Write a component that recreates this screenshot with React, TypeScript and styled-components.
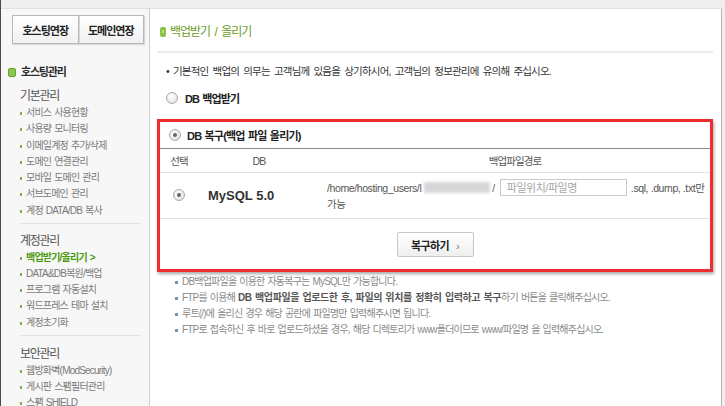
import React from 'react';
import styled, { createGlobalStyle } from 'styled-components';

const GlobalStyle = createGlobalStyle`
  html, body { margin: 0; padding: 0; }
  body {
    background: #e9e9e9;
    font-family: "Liberation Sans", "Noto Sans CJK KR", sans-serif;
    color: #333;
  }
`;

const Page = styled.div`
  display: flex;
  height: 406px;
  box-sizing: border-box;
  padding-top: 8px;
  border-left: 1px solid #4b4b4b;
  background: #eeeeee;
  overflow: hidden;
`;

const Sidebar = styled.aside`
  width: 149px;
  flex: none;
  box-sizing: border-box;
  background: #f7f7f7;
  border-right: 1px solid #cdcdcd;
  border-top: 1px solid #e0e0e0;
  padding-top: 6px;
`;

const ExtendRow = styled.div`
  display: flex;
  margin: 0 5px 0 11px;
  box-shadow: 1px 1px 1px rgba(0, 0, 0, 0.12);
`;

const ExtendButton = styled.button`
  flex: 1;
  height: 29px;
  border: 1px solid #b8b8b8;
  background: linear-gradient(#ffffff, #f0f0f0);
  font-family: inherit;
  font-size: 11px;
  font-weight: bold;
  letter-spacing: -1px;
  color: #222;
  padding: 0;
  & + & {
    border-left: none;
    box-shadow: inset 1px 0 0 #d8d8d8;
  }
`;

const SideHead = styled.div`
  display: flex;
  align-items: center;
  gap: 5px;
  margin-top: 19px;
  padding-left: 7px;
  line-height: 18px;
  font-size: 11px;
  font-weight: bold;
  letter-spacing: -1.2px;
  color: #2d2d2d;
`;

const GreenSquare = styled.span`
  width: 6px;
  height: 7px;
  border-radius: 2px;
  background: #8cc64c;
  border: 1px solid #62a12b;
`;

const Group = styled.div<{ $pt: number; $last?: boolean }>`
  margin: 0 8px 0 19px;
  padding: ${(p) => p.$pt}px 0 ${(p) => (p.$last ? 0 : 3.5)}px;
  border-bottom: ${(p) => (p.$last ? 'none' : '1px solid #e3e3e3')};
`;

const GroupTitle = styled.div`
  font-size: 12px;
  line-height: 17px;
  letter-spacing: -1.3px;
  color: #555;
`;

const SideItem = styled.div<{ $active?: boolean }>`
  position: relative;
  padding-left: 6px;
  font-size: 10px;
  line-height: 16.3px;
  letter-spacing: -0.8px;
  word-spacing: 1px;
  color: ${(p) => (p.$active ? '#4d9a10' : '#7a7a7a')};
  font-weight: ${(p) => (p.$active ? 'bold' : 'normal')};
  white-space: nowrap;
  &::before {
    content: '';
    position: absolute;
    left: 0;
    top: 7px;
    width: 2px;
    height: 3px;
    background: #7db04a;
  }
`;

const Main = styled.main`
  flex: 1;
  background: #fff;
  border-top: 1px solid #e0e0e0;
  border-right: 1px solid #b4b4b4;
  margin-right: 3px;
  padding: 0 8px 0 7px;
`;

const Title = styled.h1`
  display: flex;
  align-items: center;
  gap: 4px;
  margin: 0;
  padding: 15px 0 11px 3px;
  line-height: 16px;
  font-size: 12px;
  font-weight: normal;
  letter-spacing: -1px;
  word-spacing: 2px;
  color: #6c9d1e;
  border-bottom: 2px solid #ededed;
`;

const TitleIcon = styled.span`
  width: 6px;
  height: 10px;
  border-radius: 2px;
  background: #8cc243;
  color: #fff;
  font-size: 7px;
  line-height: 10px;
  text-align: center;
  letter-spacing: 0;
`;

const Intro = styled.p`
  margin: 10px 0 0;
  padding-left: 9px;
  font-size: 10.5px;
  line-height: 16px;
  letter-spacing: -0.8px;
  word-spacing: 2px;
  color: #333;
`;

const RadioRow = styled.label`
  display: flex;
  align-items: center;
  gap: 7px;
  margin-top: 9px;
  padding-left: 9px;
  height: 20px;
  font-size: 11px;
  font-weight: bold;
  letter-spacing: -0.9px;
  word-spacing: 1px;
  color: #222;
`;

const Radio = styled.span<{ $on?: boolean }>`
  position: relative;
  flex: none;
  width: 10px;
  height: 10px;
  border-radius: 50%;
  border: 1px solid #a9a9a9;
  background: radial-gradient(circle at 40% 35%, #ffffff, #dcdcdc);
  &::after {
    content: '';
    display: ${(p) => (p.$on ? 'block' : 'none')};
    position: absolute;
    left: 3px;
    top: 3px;
    width: 4px;
    height: 4px;
    border-radius: 50%;
    background: #666;
  }
`;

const RedBox = styled.section`
  margin-top: 11px;
  border: 3px solid #ee2d31;
  box-shadow: 1px 2px 3px rgba(0, 0, 0, 0.35);
  background: #fff;
`;

const BoxTitle = styled.div`
  display: flex;
  align-items: center;
  gap: 6px;
  height: 26px;
  padding-left: 9px;
  font-size: 11px;
  font-weight: bold;
  letter-spacing: -0.8px;
  word-spacing: 1px;
  color: #222;
`;

const Table = styled.table`
  width: 100%;
  border-collapse: collapse;
  table-layout: fixed;
`;

const Th = styled.th<{ $w?: number }>`
  position: relative;
  width: ${(p) => (p.$w ? `${p.$w}px` : 'auto')};
  height: 23px;
  padding: 0;
  border-top: 1px solid #8c8c8c;
  border-bottom: 1px solid #e2e2e2;
  font-size: 10.5px;
  font-weight: normal;
  letter-spacing: -0.9px;
  color: #555;
  text-align: center;
  & + &::before {
    content: '';
    position: absolute;
    left: 0;
    top: 6px;
    width: 1px;
    height: 12px;
    background: #e0e0e0;
  }
`;

const Td = styled.td<{ $align?: string }>`
  height: 45px;
  padding: 0;
  border-bottom: 1px solid #e0e0e0;
  text-align: ${(p) => p.$align || 'left'};
  vertical-align: middle;
`;

const DbName = styled.span`
  display: block;
  padding-left: 10px;
  font-size: 13px;
  font-weight: bold;
  color: #333;
`;

const PathCell = styled.div`
  padding-left: 7px;
  font-size: 10.5px;
  line-height: 16px;
  letter-spacing: -0.4px;
  color: #555;
`;

const PathLine = styled.div`
  display: flex;
  align-items: center;
  height: 17px;
  white-space: nowrap;
`;

const Masked = styled.span`
  display: inline-block;
  width: 66px;
  height: 11px;
  margin: 0 2px 0 3px;
  background: #d7d7d7;
  filter: blur(1.5px);
`;

const FileInput = styled.input`
  width: 127px;
  height: 17px;
  box-sizing: border-box;
  margin: 0 4px 0 5px;
  padding: 0 6px;
  border: 1px solid #cacaca;
  font-family: inherit;
  font-size: 11px;
  letter-spacing: -0.5px;
  &::placeholder { color: #a6a6a6; }
`;

const ButtonBar = styled.div`
  display: flex;
  justify-content: center;
  padding: 13px 0 12px;
`;

const RestoreButton = styled.button`
  width: 77px;
  height: 25px;
  border: 1px solid #c6c6c6;
  border-radius: 2px;
  background: linear-gradient(#ffffff, #efefef);
  font-family: inherit;
  font-size: 11px;
  font-weight: bold;
  letter-spacing: -0.6px;
  color: #222;
  padding: 0;
  span { font-weight: normal; color: #777; margin-left: 7px; }
`;

const Notes = styled.ul`
  list-style: none;
  margin: 2px 0 0;
  padding: 0 0 0 18px;
`;

const Note = styled.li`
  position: relative;
  padding-left: 7px;
  font-size: 10px;
  line-height: 16px;
  letter-spacing: -0.8px;
  word-spacing: 1px;
  color: #8a8a8a;
  white-space: nowrap;
  b { color: #555; letter-spacing: -0.4px; }
  &::before {
    content: '';
    position: absolute;
    left: 0;
    top: 7px;
    width: 3px;
    height: 3px;
    background: #6f95b6;
  }
`;

const basic = ['서비스 사용현황', '사용량 모니터링', '이메일계정 추가/삭제', '도메인 연결관리', '모바일 도메인 관리', '서브도메인 관리', '계정 DATA/DB 복사'];
const account = ['DATA&DB복원/백업', '프로그램 자동설치', '워드프레스 테마 설치', '계정초기화'];
const security = ['웹방화벽(ModSecurity)', '게시판 스팸필터관리', '스팸 SHIELD'];

export default function App() {
  return (
    <>
      <GlobalStyle />
      <Page>
        <Sidebar>
          <ExtendRow>
            <ExtendButton>호스팅연장</ExtendButton>
            <ExtendButton>도메인연장</ExtendButton>
          </ExtendRow>
          <SideHead>
            <GreenSquare />
            호스팅관리
          </SideHead>
          <Group $pt={7}>
            <GroupTitle>기본관리</GroupTitle>
            {basic.map((t) => (
              <SideItem key={t}>{t}</SideItem>
            ))}
          </Group>
          <Group $pt={9}>
            <GroupTitle>계정관리</GroupTitle>
            <SideItem $active>백업받기/올리기 &gt;</SideItem>
            {account.map((t) => (
              <SideItem key={t}>{t}</SideItem>
            ))}
          </Group>
          <Group $pt={10} $last>
            <GroupTitle>보안관리</GroupTitle>
            {security.map((t) => (
              <SideItem key={t}>{t}</SideItem>
            ))}
          </Group>
        </Sidebar>

        <Main>
          <Title>
            <TitleIcon>›</TitleIcon>
            백업받기 / 올리기
          </Title>
          <Intro>• 기본적인 백업의 의무는 고객님께 있음을 상기하시어, 고객님의 정보관리에 유의해 주십시오.</Intro>
          <RadioRow>
            <Radio />
            DB 백업받기
          </RadioRow>

          <RedBox>
            <BoxTitle>
              <Radio $on />
              DB 복구(백업 파일 올리기)
            </BoxTitle>
            <Table>
              <thead>
                <tr>
                  <Th $w={38}>선택</Th>
                  <Th $w={122}>DB</Th>
                  <Th>백업파일경로</Th>
                </tr>
              </thead>
              <tbody>
                <tr>
                  <Td $align="center">
                    <Radio $on style={{ display: 'inline-block' }} />
                  </Td>
                  <Td>
                    <DbName>MySQL 5.0</DbName>
                  </Td>
                  <Td>
                    <PathCell>
                      <PathLine>
                        /home/hosting_users/l
                        <Masked />/
                        <FileInput placeholder="파일위치/파일명" />
                        .sql, .dump, .txt만
                      </PathLine>
                      <div>가능</div>
                    </PathCell>
                  </Td>
                </tr>
              </tbody>
            </Table>
            <ButtonBar>
              <RestoreButton>
                복구하기<span>›</span>
              </RestoreButton>
            </ButtonBar>
          </RedBox>

          <Notes>
            <Note>DB백업파일을 이용한 자동복구는 MySQL만 가능합니다.</Note>
            <Note>
              FTP를 이용해 <b>DB 백업파일을 업로드한 후, 파일의 위치를 정확히 입력하고 복구</b>하기 버튼을 클릭해주십시오.
            </Note>
            <Note>루트(/)에 올리신 경우 해당 공란에 파일명만 입력해주시면 됩니다.</Note>
            <Note>FTP로 접속하신 후 바로 업로드하셨을 경우, 해당 디렉토리가 www폴더이므로 www/파일명 을 입력해주십시오.</Note>
          </Notes>
        </Main>
      </Page>
    </>
  );
}
